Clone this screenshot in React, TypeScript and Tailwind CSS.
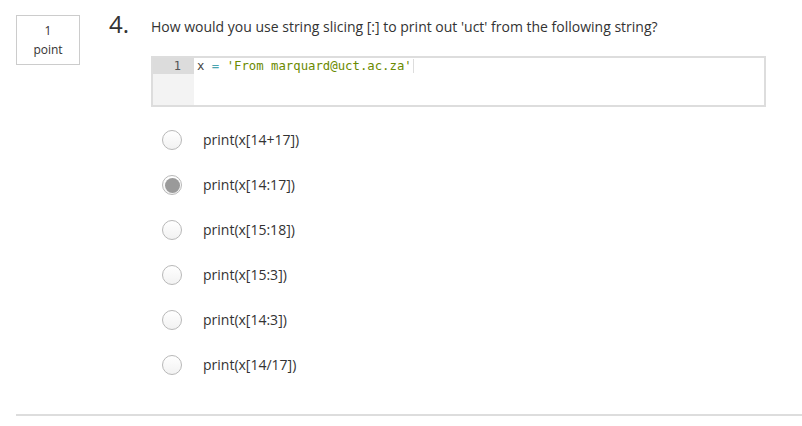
const options = [
  'print(x[14+17])',
  'print(x[14:17])',
  'print(x[15:18])',
  'print(x[15:3])',
  'print(x[14:3])',
  'print(x[14/17])',
]

function Radio({ checked }: { checked: boolean }) {
  return (
    <span className="flex h-[20px] w-[20px] items-center justify-center rounded-full border border-[#b8b8b8] bg-gradient-to-b from-white to-[#f2f2f2]">
      {checked ? <span className="h-[15px] w-[15px] rounded-full bg-[#9a9a9a]" /> : null}
    </span>
  )
}

export default function App() {
  return (
    <div className="h-[426px] w-[802px] bg-white font-['Open_Sans',sans-serif] text-[#333]">
      <div className="flex pl-[16px] pt-[15px]">
        <div className="flex h-[50px] w-[64px] flex-col items-center justify-center border border-[#ccc] text-[12px] leading-[19px]">
          <span>1</span>
          <span>point</span>
        </div>
        <div className="ml-[29px] text-[24px] leading-[24px] -mt-[3px] w-[42px]">4.</div>
        <div className="flex-1 pr-[36px]">
          <p className="mt-[2px] text-[14px] leading-[20px]">
            How would you use string slicing [:] to print out 'uct' from the following string?
          </p>
          <div className="mt-[19px] flex h-[51px] border-2 border-[#ddd] bg-white">
            <div className="w-[41px] bg-[#f3f3f3]">
              <div className="h-[16px] bg-[#dcdcdc] pr-[13px] text-right font-['DejaVu_Sans_Mono',monospace] text-[12px] leading-[16px] text-[#555]">
                1
              </div>
            </div>
            <div className="flex-1 pl-[3px] font-['DejaVu_Sans_Mono',monospace] text-[12.3px] leading-[16px]">
              <span className="border-r border-[#ddd] pr-[1px]">
                <span className="text-[#444]">x</span>
                <span className="text-[#4aa5b0]"> = </span>
                <span className="text-[#6b8a00]">'From marquard@uct.ac.za'</span>
              </span>
            </div>
          </div>
          <ul className="mt-[23px] flex flex-col gap-[25px]">
            {options.map((o, i) => (
              <li key={o} className="flex h-[20px] items-center">
                <span className="ml-[11px]">
                  <Radio checked={i === 1} />
                </span>
                <span className="ml-[21px] text-[14px] leading-[20px]">{o}</span>
              </li>
            ))}
          </ul>
        </div>
      </div>
      <div className="ml-[16px] mt-[39px] h-[2px] bg-[#ddd]" />
    </div>
  )
}
